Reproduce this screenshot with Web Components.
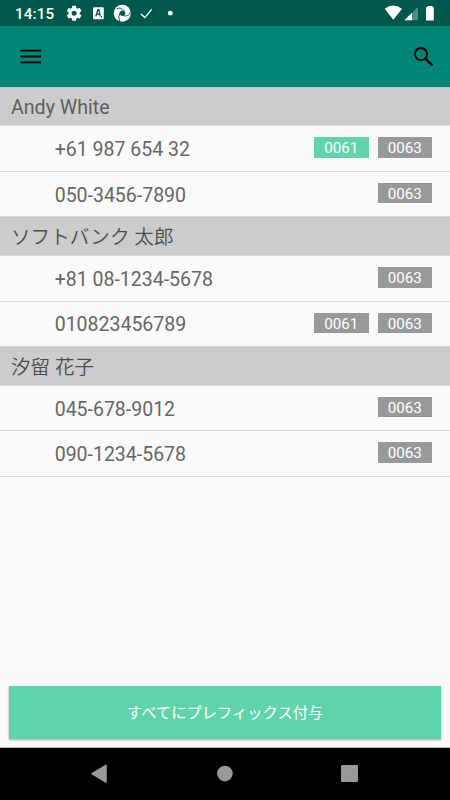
<!DOCTYPE html>
<html lang="ja">
<head>
<meta charset="utf-8">
<title>Prefix</title>
<style>
html, body { margin: 0; height: 100%; }
body { font-family: Roboto, "Noto Sans CJK JP", sans-serif; background: #fafafa; }
</style>
</head>
<body>
<phone-screen></phone-screen>
<script>
const define = (name, html, init) => {
  const template = document.createElement('template');
  template.innerHTML = html;
  customElements.define(name, class extends HTMLElement {
    connectedCallback() {
      if (this.shadowRoot) return;
      this.attachShadow({ mode: 'open' }).append(template.content.cloneNode(true));
      if (init) init(this);
    }
  });
};

define('status-bar', `
<style>
:host { display: flex; box-sizing: border-box; height: 26px; padding: 0 14px 0 15px; background: #00574b; color: #fff; align-items: center; justify-content: space-between; }
div { display: flex; align-items: center; height: 26px; }
time { font-weight: 500; font-size: 15.2px; line-height: 26px; letter-spacing: .12px; width: 51px; padding-top: 2px; white-space: nowrap; }
svg { display: block; }
</style>
<div>
  <time>14:15</time>
  <svg width="110" height="26" viewBox="66 0 110 26" fill="#fff">
    <g transform="translate(65.2 4.3) scale(.745)"><path d="M19.43 12.98c.04-.32.07-.64.07-.98s-.03-.66-.07-.98l2.11-1.65c.19-.15.24-.42.12-.64l-2-3.46c-.12-.22-.39-.3-.61-.22l-2.49 1c-.52-.4-1.08-.73-1.69-.98l-.38-2.65C14.46 2.18 14.25 2 14 2h-4c-.25 0-.46.18-.49.42l-.38 2.65c-.61.25-1.17.59-1.69.98l-2.49-1c-.23-.09-.49 0-.61.22l-2 3.46c-.13.22-.07.49.12.64l2.11 1.65c-.04.32-.07.65-.07.98s.03.66.07.98l-2.11 1.65c-.19.15-.24.42-.12.64l2 3.46c.12.22.39.3.61.22l2.49-1c.52.4 1.08.73 1.69.98l.38 2.65c.03.24.24.42.49.42h4c.25 0 .46-.18.49-.42l.38-2.65c.61-.25 1.17-.59 1.69-.98l2.49 1c.23.09.49 0 .61-.22l2-3.46c.12-.22.07-.49-.12-.64zM12 15.4a3.4 3.4 0 1 1 0-6.8 3.4 3.4 0 0 1 0 6.8z"/></g>
    <rect x="93" y="7.2" width="10.8" height="12" rx="1"/>
    <path d="M95.8 16.3 98 9.7H98.8L100.3 16.3M96.8 14.2H99.4M101 16.7H102" fill="none" stroke="#00574b" stroke-width="1.3"/>
    <circle cx="122.3" cy="13.3" r="8.5"/>
    <circle cx="122.6" cy="13.3" r="2.7" fill="#00574b"/>
    <path d="M116.6 8.9Q120 6.6 124.6 10.9M130.2 12.2Q129.5 16 124.2 16M119.6 20.9Q117.5 17.4 120.2 12.2" fill="none" stroke="#00574b" stroke-width=".9"/>
    <path d="M141 14.1 144.8 17.6 151.7 9.4" fill="none" stroke="#fff" stroke-width="1.4"/>
    <circle cx="170.3" cy="13.2" r="2.4"/>
  </svg>
</div>
<svg width="52" height="26" viewBox="384 0 52 26" fill="#fff">
  <path d="M384.7 8.8Q393.2 2.2 402 8.8L393.3 19.8Z"/>
  <path d="M418 7V20.2H404.5Z" opacity=".32"/>
  <path d="M412 12.8V20.2H404.5Z"/>
  <path d="M427.5 6h5v1.2h1.3V20.6h-7.8V7.2h1.5z"/>
</svg>`);

define('app-toolbar', `
<style>
:host { display: flex; box-sizing: border-box; height: 61.4px; padding: 0 15px 0 20px; background: #008577; align-items: center; justify-content: space-between; }
svg { display: block; }
</style>
<svg width="22" height="16" viewBox="20 49 22 16" stroke="#000" stroke-width="1.8"><path d="M20.5 50.6H41M20.5 56.5H41M20.5 62.4H41"/></svg>
<svg width="23" height="26" viewBox="412 44 23 26" fill="none" stroke="#000"><circle cx="421" cy="54.1" r="6.1" stroke-width="1.9"/><path d="M425.3 58.5 432.4 65.4" stroke-width="2.3"/></svg>`);

define('contact-group', `
<style>
:host { display: block; }
h2 { margin: 0; box-sizing: border-box; height: 39.1px; padding: 1px 0 0 11px; background: #ccc; border-top: 1px solid #c2c6c5; border-bottom: 1px solid #d9d9d9; color: #5e5e5e; font-size: 19.6px; font-weight: 400; line-height: 38px; }
h2:lang(ja) { font-weight: 350; color: #4d4d4d; }
</style>
<h2></h2><slot></slot>`, el => { el.shadowRoot.querySelector('h2').textContent = el.getAttribute('name'); });

define('phone-row', `
<style>
:host { display: flex; box-sizing: border-box; height: 45.35px; padding: 0 18px 0 54.7px; align-items: center; border-bottom: 1px solid #d8d8d8; background: #fafafa; }
span { flex: 1; color: #666; font-size: 19.5px; font-weight: 400; line-height: 24px; padding-top: 3px; }
div { display: flex; gap: 9px; padding-bottom: 2px; }
</style>
<span></span><div><slot></slot></div>`, el => { el.shadowRoot.querySelector('span').textContent = el.getAttribute('number'); });

define('prefix-chip', `
<style>
:host { display: block; width: 54.5px; height: 20.5px; background: #999; color: #fff; font-size: 15.2px; line-height: 22px; text-align: center; }
:host([selected]) { background: #5fd4aa; }
</style><slot></slot>`);

define('action-button', `
<style>
:host { display: block; box-sizing: border-box; margin: 0 8.7px 8px 9px; height: 53px; padding-top: 1px; background: #5fd4aa; color: #fff; font-size: 15.3px; line-height: 53px; text-align: center; box-shadow: 0 1px 2px rgba(0,0,0,.35); }
</style><slot></slot>`);

define('nav-bar', `
<style>
:host { display: block; box-sizing: border-box; height: 53px; background: #000; border-top: 1px solid #b5b5b5; }
svg { display: block; }
</style>
<svg width="450" height="52" viewBox="0 748 450 52" fill="#999">
  <path d="M92 773.6 106 765.4V782Z" stroke="#999" stroke-width="1.5" stroke-linejoin="round"/>
  <circle cx="224.9" cy="773.6" r="7.8"/><rect x="341" y="765" width="17" height="17" rx="1"/>
</svg>`);

define('phone-screen', `
<style>
:host { display: flex; flex-direction: column; height: 800px; width: 450px; overflow: hidden; }
main { flex: 1; }
</style>
<status-bar></status-bar>
<app-toolbar></app-toolbar>
<main>
  <contact-group lang="en" name="Andy White">
    <phone-row number="+61 987 654 32"><prefix-chip selected>0061</prefix-chip><prefix-chip>0063</prefix-chip></phone-row>
    <phone-row number="050-3456-7890"><prefix-chip>0063</prefix-chip></phone-row>
  </contact-group>
  <contact-group lang="ja" name="ソフトバンク 太郎">
    <phone-row number="+81 08-1234-5678"><prefix-chip>0063</prefix-chip></phone-row>
    <phone-row number="010823456789"><prefix-chip>0061</prefix-chip><prefix-chip>0063</prefix-chip></phone-row>
  </contact-group>
  <contact-group lang="ja" name="汐留 花子">
    <phone-row number="045-678-9012"><prefix-chip>0063</prefix-chip></phone-row>
    <phone-row number="090-1234-5678"><prefix-chip>0063</prefix-chip></phone-row>
  </contact-group>
</main>
<action-button>すべてにプレフィックス付与</action-button>
<nav-bar></nav-bar>`);
</script>
</body>
</html>
